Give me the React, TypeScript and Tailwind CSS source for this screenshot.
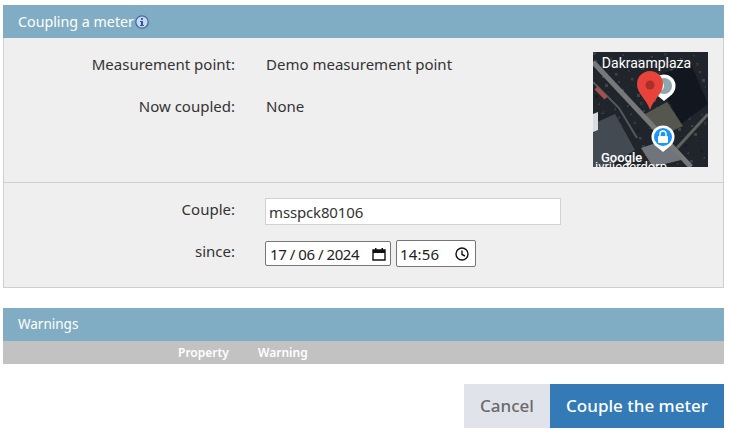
const font = "font-['Noto_Sans','Open_Sans',sans-serif]";

// rough satellite speckle for the map thumbnail
const specks = Array.from({ length: 220 }, (_, i) => ({
  x: (i * 37) % 113,
  y: (i * 61) % 113,
  w: 1 + (i % 3),
  h: 1 + (i % 3),
  fill: ["#3a3f45", "#4d535b", "#0e1320", "#5f6361"][i % 4],
}));

function InfoIcon() {
  return (
    <svg width="14" height="14" viewBox="0 0 14 14" className="ml-px">
      <circle cx="7" cy="7" r="6.2" fill="#c9d9ef" stroke="#3d69a8" strokeWidth="1.3" />
      <rect x="6" y="3" width="2" height="1.8" fill="#2f5b9c" />
      <path d="M5 6h3v4h1v1H5v-1h1V7H5z" fill="#2f5b9c" />
    </svg>
  );
}

function MapThumb() {
  return (
    <svg width="115" height="115" viewBox="0 0 115 115" className="shrink-0">
      <rect width="115" height="115" fill="#20252c" />
      {specks.map((s, i) => (
        <rect key={i} x={s.x} y={s.y} width={s.w} height={s.h} fill={s.fill} opacity="0.5" />
      ))}
      <path d="M62 24 L98 12 L115 52 L88 72 Z" fill="#12161f" />
      <path d="M0 72 L22 62 L42 98 L14 115 L0 115 Z" fill="#444a52" />
      <path d="M52 62 L74 50 L90 74 L68 84 Z" fill="#55574f" />
      <path d="M48 96 L72 88 L88 108 L60 115 Z" fill="#6f757b" />
      <path d="M0 10 L98 115" stroke="#77787a" strokeWidth="5" fill="none" />
      <path d="M0 30 L26 56 L44 86" stroke="#55575a" strokeWidth="2" fill="none" />
      <path d="M115 62 L84 96" stroke="#5f625e" strokeWidth="3" fill="none" />
      <path d="M3 36 L13 46" stroke="#a9504f" strokeWidth="4" fill="none" />
      <path d="M0 62 L5 60 L5 78 L0 80 Z" fill="#d9dde0" />
      <circle cx="71" cy="34" r="11.5" fill="#fff" />
      <circle cx="71" cy="34" r="8" fill="#8ea7ac" />
      <circle cx="66" cy="34" r="5" fill="#fff" />
      <path d="M65 44 L71 49 L77 44 Z" fill="#fff" />
      <path d="M57 58 C53 46 44 42 44 32 A13 13 0 0 1 70 32 C70 42 61 46 57 58 Z" fill="#e8433a" />
      <circle cx="57" cy="33" r="4.5" fill="#a92f2b" />
      <circle cx="70" cy="85" r="11.5" fill="#fff" />
      <circle cx="70" cy="85" r="9" fill="#1a97f5" />
      <path d="M64 95 L70 100 L76 95 Z" fill="#fff" />
      <rect x="65" y="84" width="10" height="7" rx="1" fill="#fff" />
      <path d="M67 84 V82 A3 3 0 0 1 73 82 V84" stroke="#fff" strokeWidth="1.4" fill="none" />
      <text x="53.5" y="16" textAnchor="middle" fontSize="14" fontFamily="Roboto, sans-serif" fill="#fff">Dakraamplaza</text>
      <text x="2" y="119" fontSize="13" fontFamily="Roboto, sans-serif" fill="#fff">ivrijederdorp -</text>
      <text x="8" y="110" fontSize="13" fontWeight="500" fontFamily="Roboto, sans-serif" fill="#fff">Google</text>
    </svg>
  );
}

function Row({ label, children, className }: { label: string; children: React.ReactNode; className?: string }) {
  return (
    <div className={`flex ${className ?? ""}`}>
      <div className="w-[231px] shrink-0 text-right">{label}</div>
      <div className="ml-[31px]">{children}</div>
    </div>
  );
}

export default function App() {
  return (
    <div className={`${font} h-[435px] w-[730px] overflow-hidden bg-white pl-[3px] pr-[6px] pt-[5px] text-[15px] leading-[20px] text-[#333]`}>
      <div className="flex h-[33px] items-center bg-[#81adc4] pl-[15px] text-[14.25px] text-white">
        Coupling a meter
        <InfoIcon />
      </div>
      <div className="h-[250px] border-x border-b border-[#cfcfcf] bg-[#efefef]">
        <div className="flex h-[145px] border-b border-[#cfcfcf] pr-[15px]">
          <div className="flex-1 pt-[16px]">
            <Row label="Measurement point:">Demo measurement point</Row>
            <Row label="Now coupled:" className="mt-[22px]">None</Row>
          </div>
          <div className="pt-[14px]">
            <MapThumb />
          </div>
        </div>
        <div className="pt-[15px]">
          <div className="flex">
            <div className="w-[231px] text-right leading-[22px]">Couple:</div>
            <div className="ml-[30px] flex h-[27px] w-[296px] items-center border border-[#d2d2d2] bg-white pl-[3px] tracking-[-0.15px]">
              msspck80106
            </div>
          </div>
          <div className="mt-[16px] flex">
            <div className="w-[231px] text-right leading-[21px]">since:</div>
            <div className="ml-[30px] flex gap-[5px] text-[15px] text-[#222]">
              <div className="flex h-[25px] w-[126px] items-center justify-between rounded-[2px] border border-[#767676] bg-white px-[4px]">
                <span className="tracking-[-0.45px]">17 / 06 / 2024</span>
                <svg width="14" height="14" viewBox="0 0 14 14">
                  <path d="M1 3h12v10H1z" fill="none" stroke="#111" strokeWidth="1.4" />
                  <rect x="1" y="3" width="12" height="3" fill="#111" />
                  <rect x="3" y="1" width="1.5" height="2" fill="#111" />
                  <rect x="9.5" y="1" width="1.5" height="2" fill="#111" />
                </svg>
              </div>
              <div className="flex h-[27px] w-[80px] -translate-y-px items-center justify-between rounded-[2px] border border-[#767676] bg-white pl-[3px] pr-[6px]">
                <span className="tracking-[0.2px]">14:56</span>
                <svg width="14" height="14" viewBox="0 0 14 14" fill="none" stroke="#111" strokeWidth="1.4">
                  <circle cx="7" cy="7" r="6" />
                  <path d="M7 3.5V7.5L10 9" />
                </svg>
              </div>
            </div>
          </div>
        </div>
      </div>
      <div className="mt-[20px] flex h-[33px] items-center bg-[#81adc4] pb-[2px] pl-[15px] text-[13.5px] text-white">Warnings</div>
      <div className="flex h-[23px] items-center bg-[#c2c2c2] pl-[175px] text-[12px] font-semibold text-white">
        <span className="w-[80px]">Property</span>
        <span>Warning</span>
      </div>
      <div className="mt-[20px] flex justify-end text-[17px] font-medium">
        <button className="h-[44px] w-[86px] bg-[#e0e4ea] text-[#6b6b6b]">Cancel</button>
        <button className="h-[44px] w-[174px] bg-[#337ab7] text-white">Couple the meter</button>
      </div>
    </div>
  );
}
